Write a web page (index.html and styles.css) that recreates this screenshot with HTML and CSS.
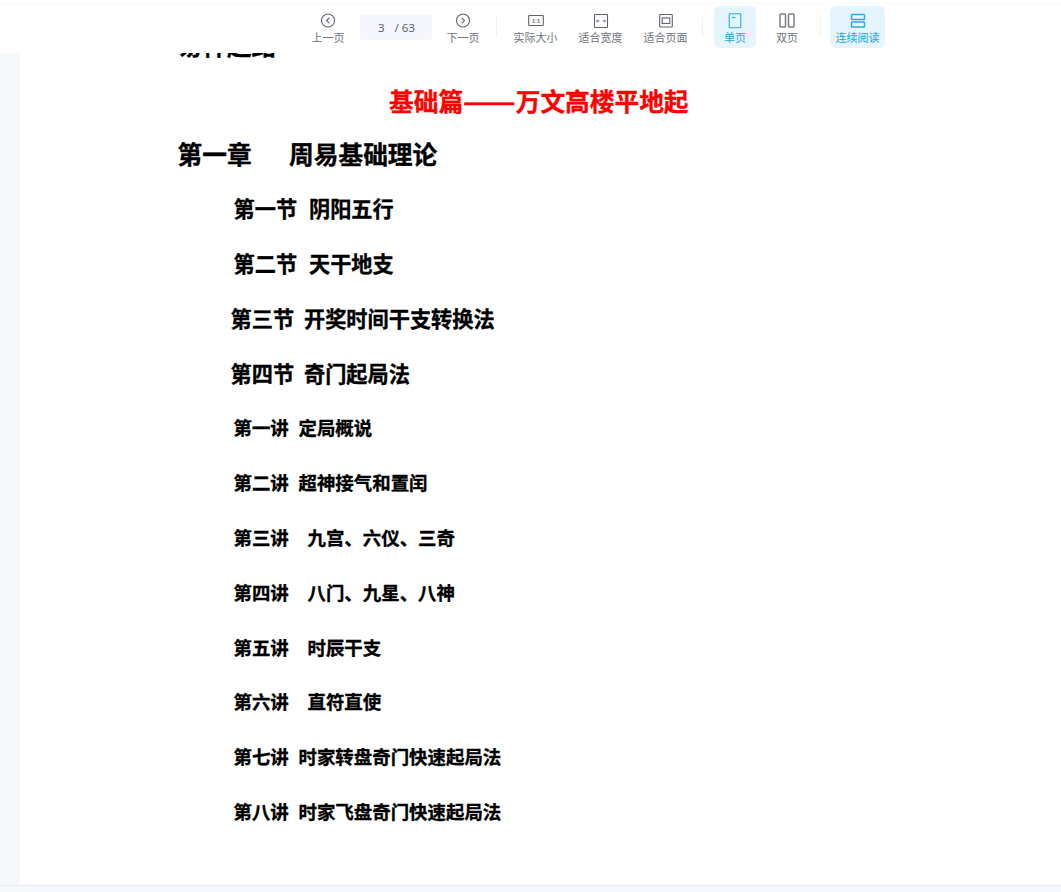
FILE: index.html
```html
<!DOCTYPE html>
<html lang="zh-CN">
<head>
<meta charset="utf-8">
<title>阅读器</title>
<link rel="stylesheet" href="styles.css">
</head>
<body>
<header class="toolbar">
  <div class="tool tool-prev">
    <svg class="icon" width="16" height="16" viewBox="0 0 16 16"><circle cx="8" cy="7.500" r="6.500"/><path d="M9.400 4.700 6.500 7.500l2.900 2.800"/></svg>
    <span>上一页</span>
  </div>
  <div class="pager"><span class="pager-cur">3</span><span>/ 63</span></div>
  <div class="tool tool-next">
    <svg class="icon" width="16" height="16" viewBox="0 0 16 16"><circle cx="8" cy="7.500" r="6.500"/><path d="M6.600 4.700l2.900 2.800-2.900 2.800"/></svg>
    <span>下一页</span>
  </div>
  <i class="divider div-a"></i>
  <div class="tool tool-w1">
    <svg class="icon" width="16" height="16" viewBox="0 0 16 16"><rect x="0.700" y="2.500" width="14.600" height="10" rx="0.800"/><text x="8" y="9.700" class="ratio">1:1</text></svg>
    <span>实际大小</span>
  </div>
  <div class="tool tool-w2">
    <svg class="icon" width="16" height="16" viewBox="0 0 16 16"><rect x="1.500" y="1.500" width="13" height="13" rx="0.800"/><path class="thin" d="M3.500 8h3M5 6.700 3.500 8 5 9.300M9.500 8h3M11 6.700 12.500 8 11 9.300"/></svg>
    <span>适合宽度</span>
  </div>
  <div class="tool tool-w2">
    <svg class="icon" width="16" height="16" viewBox="0 0 16 16"><rect x="1.700" y="1.500" width="12.600" height="12.500" rx="0.800"/><rect x="4.200" y="5" width="7.600" height="5.500"/></svg>
    <span>适合页面</span>
  </div>
  <i class="divider div-b"></i>
  <div class="tool tool-active tool-single">
    <svg class="icon" width="16" height="16" viewBox="0 0 16 16"><rect x="2.200" y="0.800" width="11.600" height="14" rx="0.800"/><path d="M4.800 4.500h3.600"/></svg>
    <span>单页</span>
  </div>
  <div class="tool tool-double">
    <svg class="icon icon-heavy" width="16" height="16" viewBox="0 0 16 16"><rect x="1" y="1" width="5.500" height="13" rx="0.800"/><rect x="9.500" y="1" width="5.500" height="13" rx="0.800"/></svg>
    <span>双页</span>
  </div>
  <i class="divider div-c"></i>
  <div class="tool tool-active tool-cont">
    <svg class="icon icon-heavy" width="16" height="16" viewBox="0 0 16 16"><rect x="1.500" y="1.500" width="13" height="5" rx="0.800"/><rect x="1.500" y="9" width="13" height="5" rx="0.800"/></svg>
    <span>连续阅读</span>
  </div>
</header>
<main class="viewer">
  <article class="page">
    <p class="prev-title"><span>易神起路</span></p>
    <h1 class="part">基础篇<span class="dash">——</span>万文高楼平地起</h1>
    <h2 class="chapter"><span>第一章</span><span>周易基础理论</span></h2>
    <h3 class="sec"><span>第一节</span><span>阴阳五行</span></h3>
    <h3 class="sec"><span>第二节</span><span>天干地支</span></h3>
    <h3 class="sec sec-out"><span>第三节</span><span>开奖时间干支转换法</span></h3>
    <h3 class="sec sec-out"><span>第四节</span><span>奇门起局法</span></h3>
    <h4 class="lec lec-first"><span>第一讲</span><span>定局概说</span></h4>
    <h4 class="lec"><span>第二讲</span><span>超神接气和置闰</span></h4>
    <h4 class="lec lec-wide"><span>第三讲</span><span>九宫、六仪、三奇</span></h4>
    <h4 class="lec lec-wide"><span>第四讲</span><span>八门、九星、八神</span></h4>
    <h4 class="lec lec-wide"><span>第五讲</span><span>时辰干支</span></h4>
    <h4 class="lec lec-wide"><span>第六讲</span><span>直符直使</span></h4>
    <h4 class="lec"><span>第七讲</span><span>时家转盘奇门快速起局法</span></h4>
    <h4 class="lec"><span>第八讲</span><span>时家飞盘奇门快速起局法</span></h4>
  </article>
</main>
</body>
</html>
```
FILE: styles.css
```css
* { box-sizing: border-box; }
html, body { margin: 0; height: 100%; }
body {
  width: 1061px;
  height: 892px;
  overflow: hidden;
  display: flex;
  flex-direction: column;
  background: #f7f8fc;
  font-family: "Noto Sans CJK SC", "Liberation Sans", sans-serif;
}
.toolbar {
  flex: none;
  height: 53px;
  background: #fff linear-gradient(#fafafa, #fafafa) no-repeat 0 3px / 100% 1px;
  display: flex;
  align-items: flex-start;
  padding: 6px 0 0 308px;
  color: #70747c;
  font-size: 11px;
}
.tool {
  display: flex;
  flex-direction: column;
  align-items: center;
  gap: 1px;
  height: 42px;
  padding-top: 7px;
  line-height: 14px;
  white-space: nowrap;
  border-radius: 6px;
}
.icon { fill: none; stroke: #60646c; stroke-width: 1.100; }
.icon-heavy { stroke-width: 1.500; stroke: #7c8088; }
.thin { stroke-width: 0.800; }
.ratio { font: 700 5.500px "Liberation Sans", sans-serif; text-anchor: middle; fill: #60646c; stroke: none; }
.tool-prev, .tool-next { width: 40px; }
.tool-w1 { width: 65px; margin-left: 6px; }
.tool-w2 { width: 65px; }
.pager {
  width: 72px;
  height: 25px;
  margin: 9px 11px 0 12px;
  background: #f6f7fc;
  border-radius: 2px;
  display: flex;
  align-items: center;
  gap: 10px;
  padding-left: 18px;
  font-size: 11.500px;
  color: #60646c;
  font-family: "Noto Sans", sans-serif;
}
.divider { flex: none; width: 1px; height: 20px; margin-top: 11px; background: #f0f1f3; }
.div-a { margin-left: 13px; }
.div-b { margin-left: 4px; margin-right: 11px; }
.div-c { margin-left: 12px; margin-right: 9px; }
.tool-single { width: 42px; }
.tool-double { width: 42px; margin-left: 10px; }
.tool-cont { width: 55px; }
.tool-active { background: #e6f4fd; color: #1ba6dc; }
.tool-active .icon { stroke: #2aaae2; }

.viewer {
  flex: none;
  height: 833px;
  padding-left: 20px;
  border-bottom: 1px solid #e8e9f2;
  overflow: hidden;
}
.page {
  height: 832px;
  background: #fff;
  color: #000;
  padding-left: 157.500px;
}
.page h1, .page h2, .page h3, .page h4, .page p { margin: 0; font-weight: 700; -webkit-text-stroke: 0.35px currentColor; white-space: nowrap; }
.page .prev-title {
  height: 4px;
  display: flex;
  align-items: flex-end;
  font-size: 24.700px;
  line-height: 25px;
}
.page .part {
  margin-top: 24px;
  height: 40px;
  line-height: 38px;
  font-size: 24.700px;
  color: #f00;
  padding-left: 211.500px;
}
.dash { display: inline-block; padding: 0 5.300px; transform: scaleX(1.250); -webkit-text-stroke: 0.6px currentColor; }
.chapter, .sec, .lec { display: flex; align-items: center; height: 54.800px; }
.page .chapter { font-size: 24.700px; gap: 37.500px; margin-top: 5px; height: 54.300px; }
.sec { font-size: 21.200px; gap: 11.900px; padding-left: 56px; }
.sec-out { padding-left: 53px; gap: 9.900px; }
.lec { font-size: 18.450px; gap: 9.700px; padding-left: 56px; }
.lec-wide { gap: 18.700px; }
.page .lec-first { margin-top: 0.500px; }
```
